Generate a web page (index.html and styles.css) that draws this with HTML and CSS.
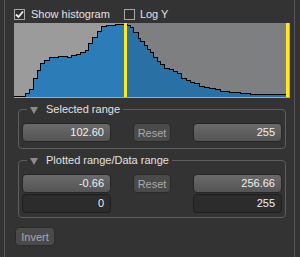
FILE: index.html
```html
<!DOCTYPE html>
<html lang="en">
<head>
    <meta charset="UTF-8">
    <meta name="viewport" content="width=device-width, initial-scale=1.0">
    <title>Histogram</title>
    <link rel="stylesheet" href="styles.css">
</head>
<body>
    <div class="panel">
        <div class="options">
            <label class="check">
                <span class="box">
                    <svg width="9" height="9" viewBox="0 0 9 9"><path d="M1 4.5 L3.5 7 L8 1.5" fill="none" stroke="#f2f2f2" stroke-width="1.8"/></svg>
                </span>
                Show histogram
            </label>
            <label class="check log">
                <span class="box"></span>
                Log Y
            </label>
        </div>

        <div class="plot">
            <svg width="276" height="75" viewBox="0 0 276 75" shape-rendering="crispEdges">
                <rect x="0" y="0" width="111" height="75" fill="#9b9b9b"/>
                <rect x="111" y="0" width="165" height="75" fill="#8d8d8d"/>
                <path fill="#2b7cb7" d="M0 75 V73 H11 V70 H15 V66 H19 V55 H23 V47 H26 V40 H30 V37 H35 V34 H44 V33 H53 V34 H57 V32 H62 V31 H66 V29 H71 V27 H74 V20 H78 V14 H83 V8 H87 V3 H92 V2 H101 V1 H113 V2 H116 V4 H119 V9 H124 V15 H126 V18 H130 V22 H133 V26 H136 V29 H139 V34 H143 V38 H146 V41 H150 V45 H155 V46 H159 V48 H163 V50 H167 V55 H172 V57 H176 V59 H180 V60 H185 V63 H190 V64 H195 V65 H201 V66 H206 V68 H215 V69 H226 V70 H236 V71 H273 V75 Z"/>
                <rect x="111" y="0" width="165" height="75" fill="rgba(30,40,50,0.13)"/>
                <path fill="none" stroke="#000" stroke-width="1" d="M0 73 H11 V70 H15 V66 H19 V55 H23 V47 H26 V40 H30 V37 H35 V34 H44 V33 H53 V34 H57 V32 H62 V31 H66 V29 H71 V27 H74 V20 H78 V14 H83 V8 H87 V3 H92 V2 H101 V1 H113 V2 H116 V4 H119 V9 H124 V15 H126 V18 H130 V22 H133 V26 H136 V29 H139 V34 H143 V38 H146 V41 H150 V45 H155 V46 H159 V48 H163 V50 H167 V55 H172 V57 H176 V59 H180 V60 H185 V63 H190 V64 H195 V65 H201 V66 H206 V68 H215 V69 H226 V70 H236 V71 H273"/>
                <rect x="0" y="74" width="276" height="1" fill="#a9a9a9"/>
                <rect x="275" y="0" width="1" height="75" fill="#a9a9a9"/>
                <rect x="110" y="0" width="3" height="74" fill="#ffe81c"/>
                <rect x="272" y="0" width="3" height="74" fill="#ffe81c"/>
            </svg>
        </div>

        <fieldset class="group">
            <legend><span class="arrow"></span>Selected range</legend>
            <div class="grid">
                <div class="field">102.60</div>
                <button class="btn">Reset</button>
                <div class="field">255</div>
            </div>
        </fieldset>

        <fieldset class="group second">
            <legend><span class="arrow"></span>Plotted range/Data range</legend>
            <div class="grid">
                <div class="field">-0.66</div>
                <button class="btn">Reset</button>
                <div class="field">256.66</div>
                <div class="field dark">0</div>
                <div></div>
                <div class="field dark">255</div>
            </div>
        </fieldset>

        <button class="btn invert">Invert</button>
    </div>
</body>
</html>
```

FILE: styles.css
```css
html, body {
    margin: 0;
    background-color: #333333;
}
body {
    font-family: 'Liberation Sans', Arial, sans-serif;
    font-size: 11px;
    color: #e2e2e2;
}
.panel {
    margin-left: 4px;
    width: 289px;
    min-height: 257px;
    border-left: 1px solid #555555;
    border-right: 1px solid #555555;
    box-sizing: content-box;
}
.options {
    display: flex;
    align-items: center;
    padding: 9px 0 0 9px;
    height: 11px;
}
.check {
    display: flex;
    align-items: center;
    gap: 6px;
    line-height: 11px;
}
.check.log {
    margin-left: 14px;
    gap: 5px;
}
.box {
    display: flex;
    align-items: center;
    justify-content: center;
    width: 9px;
    height: 9px;
    border: 1px solid #a8a8a8;
    background-color: #2e2e2e;
}
.plot {
    margin: 3px 0 0 9px;
    width: 276px;
    height: 75px;
}
.plot svg {
    display: block;
}
.group {
    margin: 5px 8px 0 13px;
    padding: 7px 3px 6px 3px;
    border: 1px solid #5e5e5e;
    border-radius: 4px;
    min-width: 0;
}
.group.second {
    padding-bottom: 4px;
}
.group legend {
    margin-left: 5px;
    padding: 0 3px;
    line-height: 13px;
    color: #e2e2e2;
}
.arrow {
    display: inline-block;
    width: 0;
    height: 0;
    border-left: 4.5px solid transparent;
    border-right: 4.5px solid transparent;
    border-top: 7px solid #8c8c8c;
    margin-right: 8px;
    vertical-align: -1px;
}
.grid {
    display: grid;
    grid-template-columns: 89px 1fr 89px;
    row-gap: 1px;
    align-items: center;
}
.grid .btn {
    justify-self: center;
}
.field {
    height: 17px;
    line-height: 17px;
    padding-right: 6px;
    text-align: right;
    color: #f0f0f0;
    border: 1px solid #262626;
    border-radius: 4px;
    background: linear-gradient(#6a6a6a, #545454);
}
.field.dark {
    background: #2c2c2c;
    border-color: #1e1e1e;
}
.btn {
    width: 38px;
    height: 19px;
    padding: 0;
    font-family: inherit;
    font-size: 11px;
    color: #a9a9a9;
    background-color: #4a4a4a;
    border: 1px solid #2a2a2a;
    border-radius: 4px;
}
.invert {
    display: block;
    justify-self: start;
    margin: 9px 0 0 10px;
    width: 40px;
}
```
